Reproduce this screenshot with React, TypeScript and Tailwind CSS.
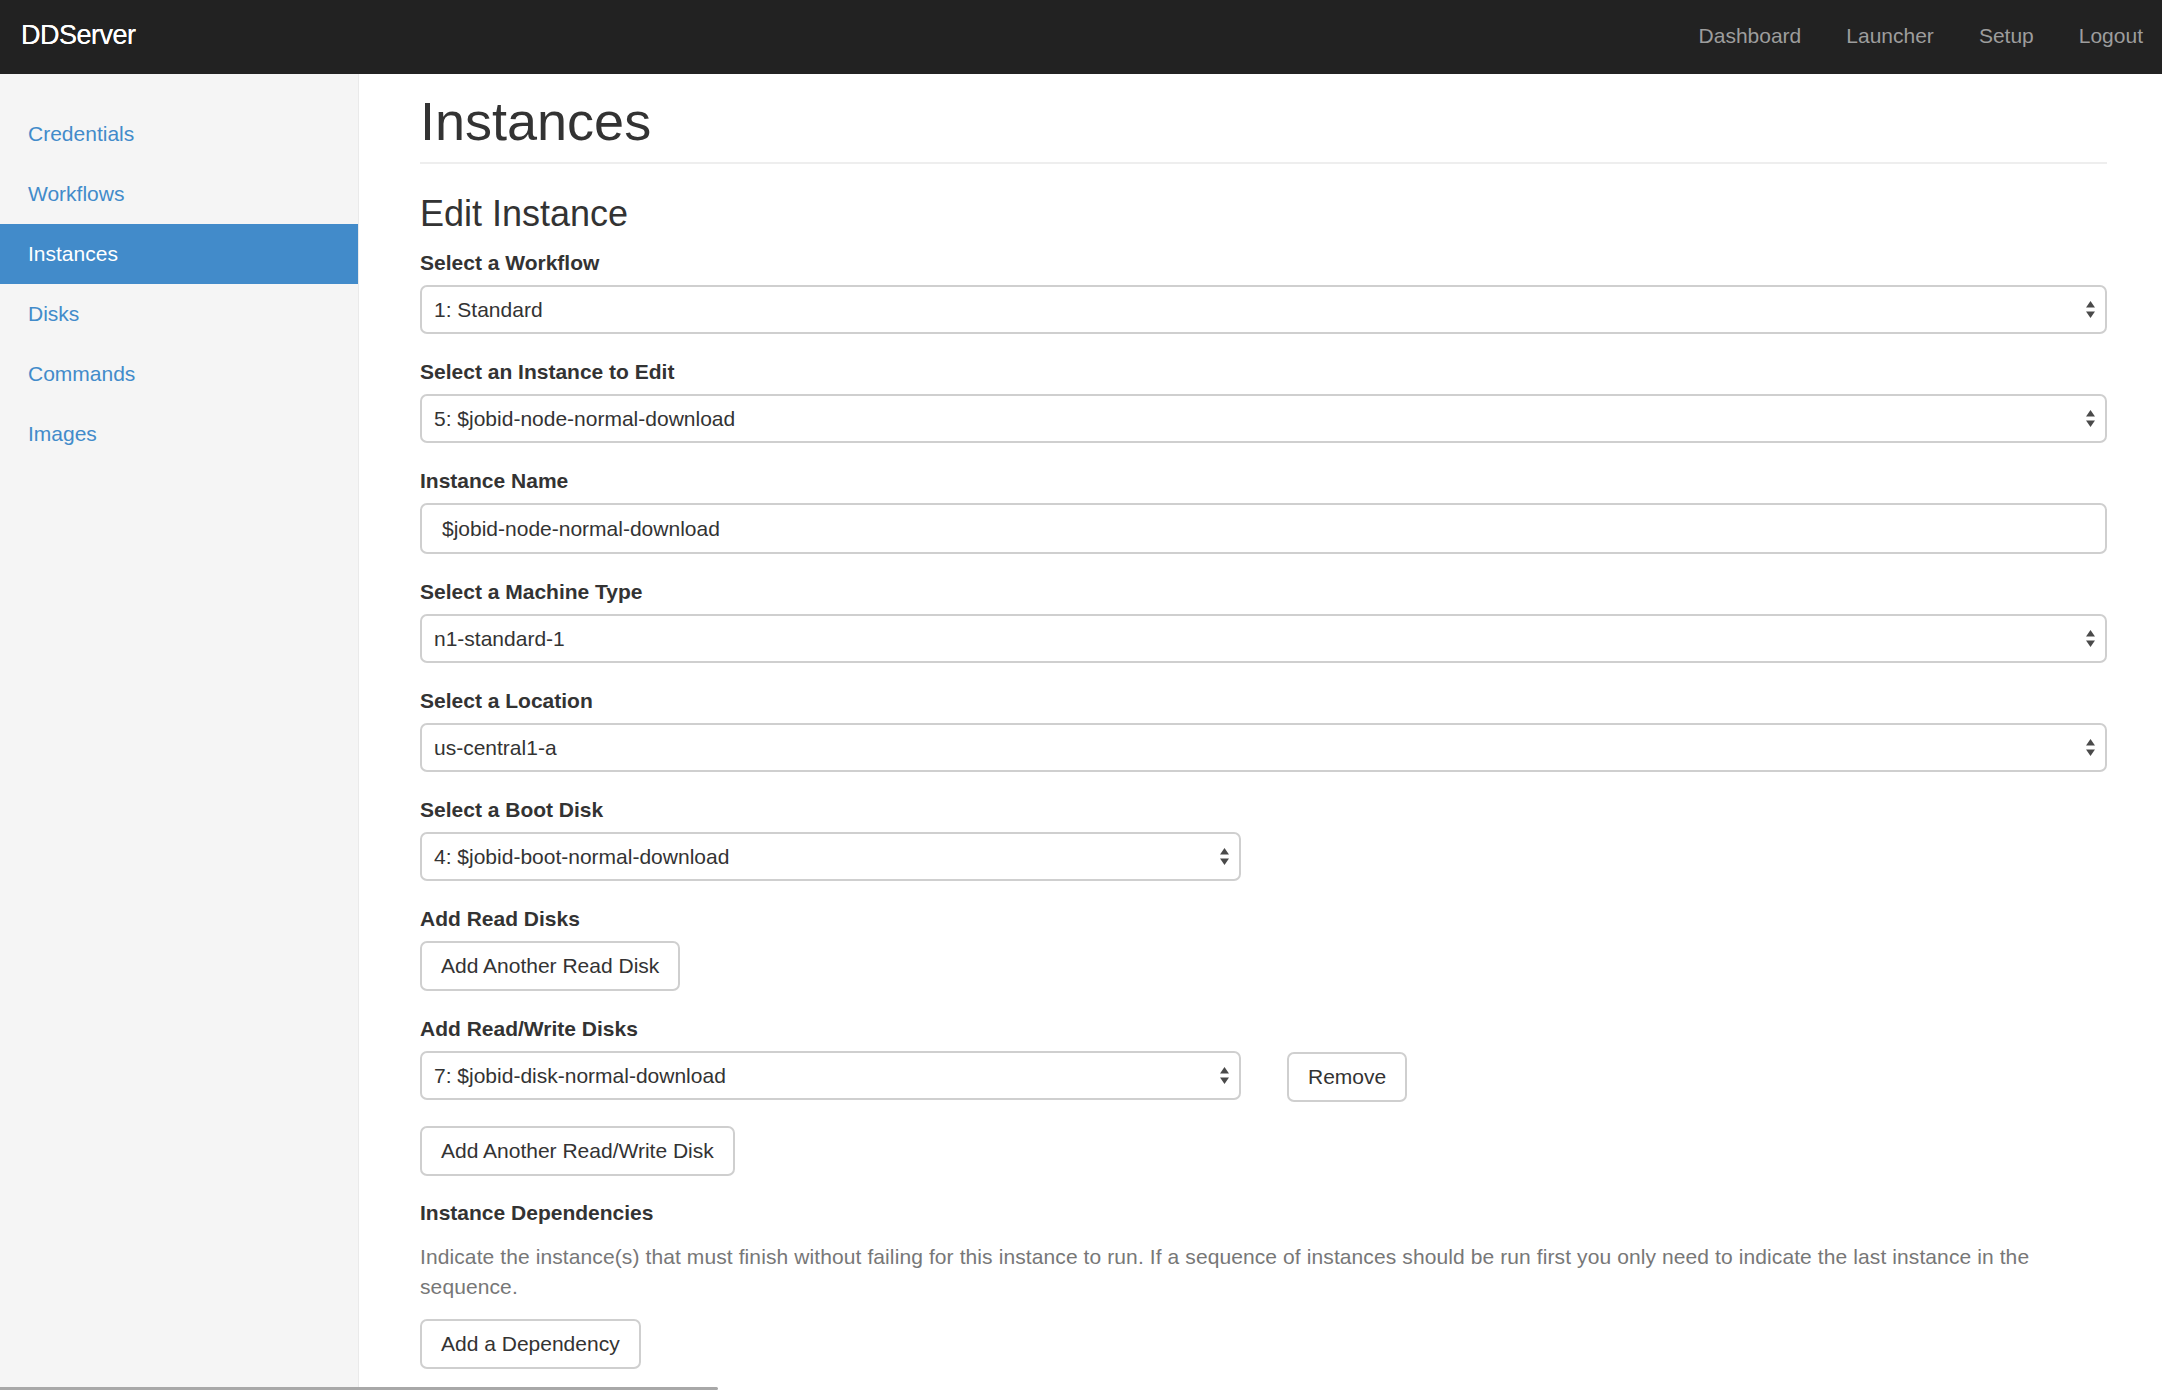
import type { ReactNode } from "react";

// --- Data ---
const sideLinks = ["Credentials", "Workflows", "Instances", "Disks", "Commands", "Images"];
const topLinks = ["Dashboard", "Launcher", "Setup", "Logout"];

// --- Small pieces ---
const Arrows = () => (
  <svg width="9" height="17" viewBox="0 0 9 17" className="shrink-0">
    <path d="M0 6.5 L4.5 0 L9 6.5 Z" fill="#4a4a4a" />
    <path d="M0 10.5 L9 10.5 L4.5 17 Z" fill="#4a4a4a" />
  </svg>
);

const FakeSelect = ({ value, className = "w-full" }: { value: string; className?: string }) => (
  <div
    className={`${className} h-[49px] flex items-center justify-between pl-[12px] pr-[10px] border-2 border-[#cfcfcf] rounded-[7px] bg-white text-[21px] text-[#333]`}
  >
    <span>{value}</span>
    <Arrows />
  </div>
);

const Btn = ({ children, className = "" }: { children: ReactNode; className?: string }) => (
  <button
    className={`h-[50px] px-[19px] border-2 border-[#cfcfcf] rounded-[7px] bg-white text-[21px] text-[#333] ${className}`}
  >
    {children}
  </button>
);

const Group = ({ label, children, mb = "mb-[23px]" }: { label: string; children: ReactNode; mb?: string }) => (
  <div className={mb}>
    <div className="text-[21px] leading-[30px] font-bold text-[#333] mb-[7px]">{label}</div>
    {children}
  </div>
);

export default function App() {
  return (
    <div
      className="h-[1390px] overflow-hidden flex flex-col bg-white text-[#333]"
      style={{ fontFamily: '"Liberation Sans", Arial, sans-serif' }}
    >
      {/* Navbar */}
      <div className="h-[74px] shrink-0 bg-[#222] flex items-center justify-between pb-[3px]">
        <span className="pl-[21px] text-[27px] text-white tracking-[-0.5px] [text-shadow:0_0_0.4px_#fff]">
          DDServer
        </span>
        <div className="flex items-center gap-[45px] pr-[19px] text-[21px] text-[#9d9d9d]">
          {topLinks.map((l) => (
            <span key={l}>{l}</span>
          ))}
        </div>
      </div>

      <div className="flex flex-1 min-h-0">
        {/* Sidebar */}
        <aside className="w-[359px] shrink-0 bg-[#f5f5f5] border-r border-[#eaeaea] pt-[30px]">
          {sideLinks.map((l) => (
            <div
              key={l}
              className={`h-[60px] flex items-center pl-[28px] text-[21px] ${
                l === "Instances" ? "bg-[#428bca] text-white" : "text-[#428bca]"
              }`}
            >
              {l}
            </div>
          ))}
        </aside>

        {/* Main */}
        <main className="flex-1 min-w-0 pl-[61px] pr-[55px]">
          <div className="mt-[18px] pb-[11px] border-b-2 border-[#eee]">
            <h1 className="text-[54px] leading-[1.1] font-normal">Instances</h1>
          </div>
          <h3 className="mt-[30px] mb-[14px] text-[36px] leading-[1.1] font-normal">Edit Instance</h3>

          <Group label="Select a Workflow">
            <FakeSelect value="1: Standard" />
          </Group>
          <Group label="Select an Instance to Edit">
            <FakeSelect value="5: $jobid-node-normal-download" />
          </Group>
          <Group label="Instance Name">
            <div className="h-[51px] flex items-center pl-[20px] border-2 border-[#cfcfcf] rounded-[7px] text-[21px]">
              $jobid-node-normal-download
            </div>
          </Group>
          <Group label="Select a Machine Type">
            <FakeSelect value="n1-standard-1" />
          </Group>
          <Group label="Select a Location">
            <FakeSelect value="us-central1-a" />
          </Group>
          <Group label="Select a Boot Disk">
            <FakeSelect value="4: $jobid-boot-normal-download" className="w-[821px]" />
          </Group>
          <Group label="Add Read Disks">
            <Btn>Add Another Read Disk</Btn>
          </Group>
          <Group label="Add Read/Write Disks">
            <div className="flex items-start gap-[46px] mb-[24px]">
              <FakeSelect value="7: $jobid-disk-normal-download" className="w-[821px]" />
              <Btn className="mt-[1px]">Remove</Btn>
            </div>
            <Btn>Add Another Read/Write Disk</Btn>
          </Group>

          <div className="mt-[-1px]">
            <div className="text-[21px] leading-[30px] font-bold mb-[14px]">Instance Dependencies</div>
            <p className="text-[21px] leading-[30px] text-[#777] mb-[17px] tracking-[0.1px]">
              Indicate the instance(s) that must finish without failing for this instance to run. If a sequence of
              instances should be run first you only need to indicate the last instance in the sequence.
            </p>
            <Btn>Add a Dependency</Btn>
          </div>
        </main>
      </div>

      {/* overlay scrollbar thumb */}
      <div className="fixed left-0 bottom-0 h-[3px] w-[718px] bg-[#a8a8a8] rounded-r-full" />
    </div>
  );
}
